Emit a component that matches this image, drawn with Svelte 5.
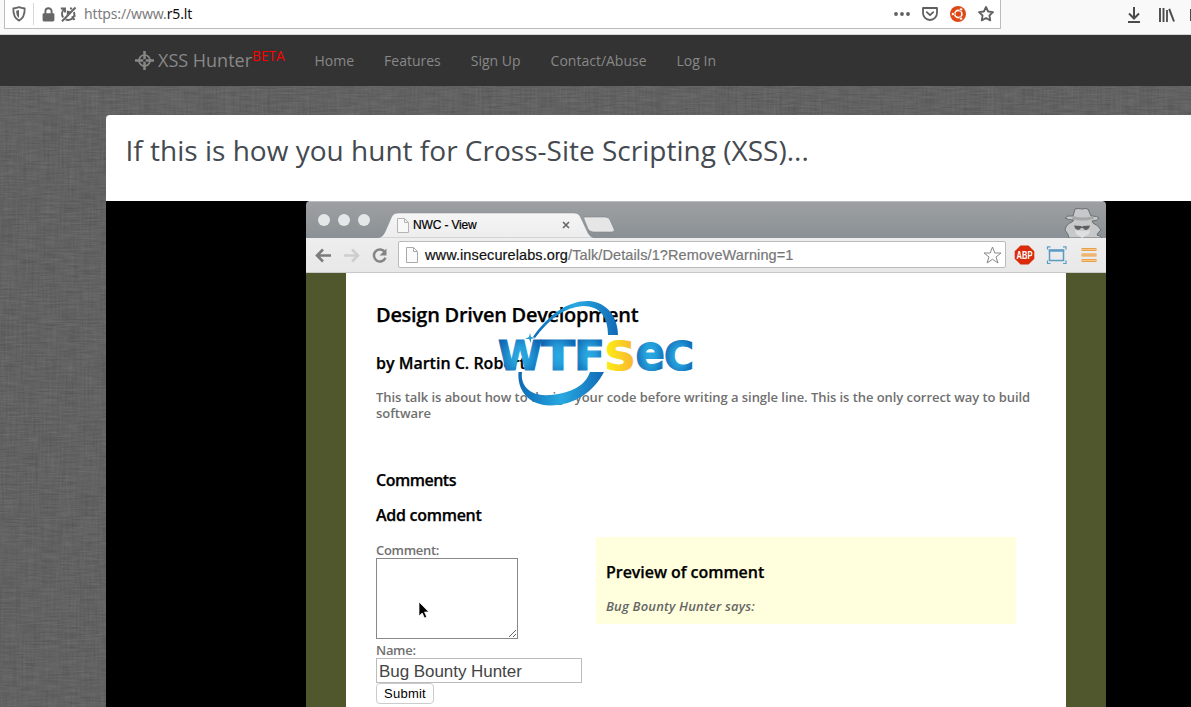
<script>
  const links = ['Home', 'Features', 'Sign Up', 'Contact/Abuse', 'Log In'];
  const letters = [
    { t: 'W', x: 498, w: 44, s: 40 },
    { t: 'T', x: 541, w: 34, s: 40 },
    { t: 'F', x: 574, w: 31, s: 40 },
    { t: 'S', x: 604.5, w: 31, s: 38.5, gold: true },
    { t: 'e', x: 635.5, w: 29.5, s: 49 },
    { t: 'C', x: 664, w: 30, s: 38.5 }
  ];
</script>

<div class="screen">
  <header class="toolbar">
    <div class="urlbar">
      <svg class="shield" width="14" height="16" viewBox="0 0 14 16"><path d="M7 1.2C9 2 11 2.3 12.7 2.5C12.8 8 12 12 7 14.6C2 12 1.2 8 1.3 2.5C3 2.3 5 2 7 1.2Z" fill="none" stroke="#666" stroke-width="1.8"/><path d="M7 4V12C4.8 10.5 4.2 8 4.2 4.7Z" fill="#666"/></svg>
      <i class="sep"></i>
      <svg class="lock" width="13" height="15" viewBox="0 0 13 15"><path d="M3.4 7V4.3a3.1 3.1 0 0 1 6.2 0V7" fill="none" stroke="#666" stroke-width="1.9"/><rect x=".6" y="6.2" width="11.8" height="8.2" rx="1.3" fill="#666"/></svg>
      <svg class="perm" width="17" height="16" viewBox="0 0 17 16" fill="none" stroke="#666" stroke-width="1.9"><path d="M3.200 11.500A6 6 0 0 1 4.500 3M.8 2.500H5V6.500M10 2.200A6 6 0 0 1 12 2.800M14 6A6 6 0 0 1 8 14L5.500 13.500M15.500 9.500l-3 1.500 2 3"/><path d="M2 15.200L15.500 1.500" stroke-width="2"/><path d="M6.800 4.500v5l4.200-4Z" fill="#666" stroke="none"/></svg>
      <span class="url">https://www.<b>r5.lt</b></span>
      <span class="grow"></span>
      <div class="actions">
        <svg width="16" height="16" viewBox="0 0 16 16" fill="#5f5f5f"><circle cx="2" cy="8" r="1.9"/><circle cx="8" cy="8" r="1.9"/><circle cx="14" cy="8" r="1.9"/></svg>
        <svg width="16" height="16" viewBox="0 0 16 16" fill="none" stroke="#5f5f5f" stroke-width="1.8" stroke-linecap="round" stroke-linejoin="round"><path d="M1 2h14v5a7 7 0 0 1-14 0Z"/><path d="M4.8 6.2L8 9.2l3.2-3"/></svg>
        <svg width="16" height="16" viewBox="0 0 16 16"><circle cx="8" cy="8" r="8" fill="#dd4814"/><circle cx="8.3" cy="8" r="3.6" fill="none" stroke="#fff" stroke-width="1.6"/><g fill="#fff" stroke="#dd4814" stroke-width=".7"><circle cx="2.9" cy="8" r="1.6"/><circle cx="11" cy="3.4" r="1.6"/><circle cx="11" cy="12.6" r="1.6"/></g></svg>
        <svg width="16" height="16" viewBox="0 0 16 16" fill="none" stroke="#5f5f5f" stroke-width="1.8" stroke-linejoin="round"><path d="M8 1l2.1 4.5 4.900.6-3.600 3.400.9 4.900L8 12l-4.300 2.400.9-4.900L1 6.100l4.900-.6Z"/></svg>
      </div>
    </div>
    <div class="tools">
      <svg width="14" height="16" viewBox="0 0 14 16" fill="none" stroke="#4b4b4d" stroke-width="2"><path d="M7 0v11M2 6.500l5 5 5-5M1 15h12"/></svg>
      <svg width="16" height="14" viewBox="0 0 16 14" fill="none" stroke="#4b4b4d" stroke-width="2"><path d="M1 0v14M4.500 0v14" stroke-width="1.900"/><path d="M8 2v12" stroke-width="1.800"/><path d="M10.200.8L15 13.500"/></svg>
      <i class="stub"></i>
    </div>
  </header>

  <nav class="nav">
    <svg width="19" height="19" viewBox="0 0 19 19" fill="none" stroke="#888"><circle cx="9.500" cy="9.500" r="5.500" stroke-width="1.700"/><path d="M9.500 0v8.200M9.500 10.800V19M0 9.500h8.200M10.800 9.500H19" stroke-width="2.500"/></svg>
    <span class="brand">XSS Hunter<sup>BETA</sup></span>
    <div class="links">{#each links as l}<a href="#top">{l}</a>{/each}</div>
  </nav>

  <main class="page">
    <svg class="linen" width="1191" height="621" aria-hidden="true">
      <defs>
        <filter id="weft" x="0" y="0" width="100%" height="100%" color-interpolation-filters="sRGB"><feTurbulence type="fractalNoise" baseFrequency=".05 .6" numOctaves="3" seed="4"/><feColorMatrix values=".16 0 0 0 .305  .16 0 0 0 .305  .16 0 0 0 .305  0 0 0 0 1"/></filter>
        <filter id="warp" x="0" y="0" width="100%" height="100%" color-interpolation-filters="sRGB"><feTurbulence type="fractalNoise" baseFrequency=".5 .03" numOctaves="3" seed="9"/><feColorMatrix values=".14 0 0 0 .315  .14 0 0 0 .315  .14 0 0 0 .315  0 0 0 0 1"/></filter>
      </defs>
      <rect width="1191" height="621" filter="url(#weft)"/>
      <rect width="1191" height="621" filter="url(#warp)" opacity=".4"/>
    </svg>
    <section class="panel">
      <h1>If this is how you hunt for Cross-Site Scripting (XSS)...</h1>
      <div class="video">
        <div class="window">
          <div class="tabs">
            <svg width="800" height="37" viewBox="0 0 800 37">
              <defs>
                <linearGradient id="bar" x2="0" y2="1"><stop stop-color="#9da1a4"/><stop offset="1" stop-color="#8b9094"/></linearGradient>
                <linearGradient id="tab" x2="0" y2="1"><stop stop-color="#f5f5f5"/><stop offset="1" stop-color="#ededed"/></linearGradient>
              </defs>
              <path d="M0 37V4q0-4 4-4H796q4 0 4 4V37Z" fill="url(#bar)"/>
              <path d="M3 .5H797" stroke="#b9bdbf"/>
              <g fill="#e4e7e8"><circle cx="18" cy="19" r="6"/><circle cx="38" cy="19" r="6"/><circle cx="58" cy="19" r="6"/></g>
              <path d="M72 37Q77 36 79 31L86 15Q88 12 92 12H268Q272 12 274 15L282 32Q284 36 288 37Z" fill="url(#tab)" stroke="#858a8e" stroke-width=".5"/>
              <path d="M279 16H299Q303 16 304 19L308 28Q309 31 305 31H287Q284 31 282 28L278 18Q277 16 279 16Z" fill="#e6e6e6" stroke="#7e8386" stroke-width=".6"/>
              <path d="M91.500 17.500h7l4 4v10h-11ZM98.500 17.500v4h4" fill="#f8f8f8" stroke="#b5b5b5"/>
              <path d="M257 21l6 6M263 21l-6 6" stroke="#666" stroke-width="1.600"/>
              <path d="M763 37q0-3-4-8 1-6 7-8l2-2q-6 0-9-2 2-3 8-2l2-7q3-1 7 0 4-1 6 0l3 7q7 0 8 2-2 3-7 3l1 2q5 2 8 7-4 3-4 5 4 1 5 3Z" fill="#c6c8c9" stroke="#6b6f72" stroke-width="1"/>
              <path d="M769 29q8 2 15 0l-1 4-7 4-6-4Z" fill="#dedfdf"/>
              <path d="M767 15q10 3 20 0l1 3q-12 3-22 0Z" fill="#a5a7a8"/>
              <path d="M768 24.500l7 .5 1 1 1-1 7-.5q-1 4-4 4.500-2 0-3-2h-2q-1 2-3 2-3-.5-4-4.500Z" fill="#5e5f61"/>
            </svg>
            <span class="tabname">NWC - View</span>
          </div>
          <div class="chromebar">
            <svg width="92" height="35" viewBox="0 0 92 35"><g fill="none" stroke-width="2.600"><path d="M25 17.500H12M17 11.500l-6 6 6 6" stroke="#7c7c7c"/><path d="M38 17.500H51M46 11.500l6 6-6 6" stroke="#cecece"/><path d="M79 14.200a6 6 0 1 0 .5 5.600" stroke="#858585" stroke-width="2.500"/></g><path d="M80.500 10.500v7h-7Z" fill="#858585"/></svg>
            <div class="address">
              <svg width="14" height="16" viewBox="0 0 14 16"><path d="M1.500.5h7l4 4v11h-11ZM8.500.5v4h4" fill="#fbfbfb" stroke="#aaa"/></svg>
              <span>www.insecurelabs.org<em>/Talk/Details/1?RemoveWarning=1</em></span>
              <svg width="19" height="18" viewBox="0 0 19 18"><path d="M9.500 1l2.300 6H18l-5 4 2 6-5.500-3.700L4 17l2-6L1 7h6.200Z" fill="#fff" stroke="#888"/></svg>
            </div>
            <svg class="exts" width="94" height="35" viewBox="0 0 94 35"><path d="M8.500 8h8l5.800 5.800v7.600l-5.800 5.800h-8L2.700 21.400v-7.600Z" fill="#da2b0b" transform="translate(0 -.6)"/><text x="12.500" y="20.600" text-anchor="middle" textLength="16" lengthAdjust="spacingAndGlyphs">ABP</text><g fill="none" stroke="#5b9cc4" stroke-width="1.500"><rect x="37.500" y="12" width="14" height="10.500"/><path d="M36.800 12.800h15.400" stroke-width="2"/><path d="M35.500 11.500V8.800h3M51 8.800h3V11.500M54 22.500v3h-3M38.500 25.500h-3v-3" stroke-width="1.200"/></g><path d="M69.500 11.500h15M69.500 17h15M69.500 22.500h15" stroke="#e9a04a" stroke-width="3"/><path d="M69.500 11.500h15M69.500 17h15M69.500 22.500h15" stroke="#f9c88b" stroke-width="1.200"/></svg>
          </div>
          <div class="site">
            <article>
              <h2>Design Driven Development</h2>
              <h3 class="by">by Martin C. Robert</h3>
              <p class="desc"><span>This talk is about how to design your code before writing a single line. This is the only correct way to build</span><br>software</p>
              <h3 class="comments">Comments</h3>
              <h3 class="add">Add comment</h3>
              <div class="cols">
                <div class="form">
                  <label for="c">Comment:</label>
                  <div class="area" id="c"><svg width="9" height="9" viewBox="0 0 9 9" stroke="#666"><path d="M1 8L8 1M5 8l3-3"/></svg></div>
                  <label for="n">Name:</label>
                  <div class="name" id="n">Bug Bounty Hunter</div>
                  <div class="submit">Submit</div>
                </div>
                <div class="preview"><h3>Preview of comment</h3><p>Bug Bounty Hunter says:</p></div>
              </div>
            </article>
          </div>
        </div>
      </div>
    </section>
  </main>

  <svg class="overlay" width="1191" height="707" viewBox="0 0 1191 707">
    <defs>
      <linearGradient id="swoosh" x1="0" y1="0" x2="1" y2="0"><stop stop-color="#0d69b5"/><stop offset=".5" stop-color="#28a9e1"/><stop offset="1" stop-color="#1169b5"/></linearGradient>
      <radialGradient id="blue" r=".6"><stop stop-color="#29abe2"/><stop offset=".35" stop-color="#249cd8"/><stop offset=".85" stop-color="#1068b4"/></radialGradient>
      <linearGradient id="gold"><stop stop-color="#fbf112"/><stop offset="1" stop-color="#f9b233"/></linearGradient>
    </defs>
    <path d="M533 337C549 314 568 301 588 301C608 302 618 318 618 335H608C608 317 600 306 583 306C565 307 549 319 535 338Z" fill="url(#swoosh)"/>
    <path d="M518.500 372H522C520 388 533 397 551 395C571 393 585 386 590 372H604C594 391 575 405.500 550 405.500C529 405 517 391 518.500 372Z" fill="url(#swoosh)"/>
    <path d="M530 333l1 4 4 1-4 1 0 4-2-4-4 0 4-2Z" fill="#2499d5"/>
    {#each letters as l}
      <text class="mark" x={l.x} y="370" font-size={l.s} textLength={l.w} lengthAdjust="spacingAndGlyphs" fill={l.gold ? 'url(#gold)' : 'url(#blue)'} stroke={l.gold ? 'url(#gold)' : 'url(#blue)'}>{l.t}</text>
    {/each}
    <path d="M419 602v14l3.200-3 2.300 5 2.200-1-2.200-5h4.300Z" fill="#000" stroke="#fff" stroke-width=".7"/>
  </svg>
</div>

<style>
  :global(body) { overflow: hidden; }
  * { box-sizing: border-box; }
  .screen { position: relative; width: 1191px; height: 707px; overflow: hidden; font-family: "Open Sans", sans-serif; display: flex; flex-direction: column; }
  svg { display: block; flex: none; }
  .toolbar { height: 35px; background: #f9f9fa; border-bottom: 1px solid #d3d3d4; display: flex; align-items: flex-start; padding-left: 4px; flex: none; }
  .urlbar { width: 997px; height: 29px; background: #fff; border: 1px solid #bcbcbc; border-top: 0; display: flex; align-items: center; padding: 0 6px 0 7px; }
  .sep { width: 1px; height: 22px; background: #d7d7d8; margin: 0 8px 0 7px; }
  .perm { margin-left: 5px; }
  .url { font-family: "Noto Sans", sans-serif; font-size: 14px; line-height: 20px; color: #7c7c7d; margin-left: 7px; letter-spacing: -.15px; }
  .url b { font-weight: 400; color: #0c0c0d; }
  .grow { flex: 1; }
  .actions { display: flex; gap: 12px; }
  .tools { flex: 1; display: flex; align-items: center; height: 29px; padding-left: 126px; gap: 18px; overflow: hidden; }
  .stub { width: 6px; height: 12px; border: 2px solid #4b4b4d; flex: none; margin-left: -3px; }
  .nav { height: 51px; background: #333; flex: none; display: flex; align-items: center; padding: 0 0 1px 135px; color: #888; }
  .brand { font-size: 18px; margin-left: 4px; white-space: nowrap; width: 129px; line-height: 24px; }
  .brand sup { font-size: 13.700px; color: #f00; line-height: 0; vertical-align: 6px; }
  .links { display: flex; gap: 30px; margin-left: 27.500px; font-size: 14px; }
  .links a { color: #888; text-decoration: none; }
  .page { position: relative; height: 621px; background: #616161; padding: 29px 0 0 106px; flex: none; }
  .linen { position: absolute; left: 0; top: 0; }
  .panel { position: relative; height: 592px; background: #fff; border-radius: 4px 0 0 0; overflow: hidden; }
  h1 { margin: 0; height: 86px; padding: 15px 0 0 19.500px; font-size: 28px; line-height: 40px; font-weight: 400; color: #444a50; white-space: nowrap; letter-spacing: .01px; }
  .video { background: #000; height: 506px; padding-left: 200px; }
  .window { width: 800px; font-family: "Liberation Sans", sans-serif; }
  .tabs { position: relative; height: 37px; }
  .tabname { position: absolute; left: 107px; top: 17px; font-size: 12px; line-height: 15px; color: #000; -webkit-text-stroke: .2px; letter-spacing: -.15px; }
  .chromebar { height: 35px; background: linear-gradient(#eee, #e8e8e8); border-bottom: 1px solid #c9c9c9; display: flex; align-items: flex-start; }
  .address { width: 608px; height: 27px; margin-top: 3px; background: #fff; border: 1px solid #bbb; border-radius: 2px; display: flex; align-items: center; padding: 0 3px 0 6px; }
  .address span { flex: 1; margin-left: 6px; font-size: 14.500px; letter-spacing: .1px; color: #111; -webkit-text-stroke: .2px; white-space: nowrap; }
  .address em { font-style: normal; color: #777; }
  .exts { margin-left: 6px; }
  .exts text { font: 700 10px "Liberation Sans", sans-serif; fill: #fff; }
  .site { height: 434px; background: #50572d; padding: 0 40px; }
  article { height: 434px; background: #fff; padding: 28px 30px 0; font-family: "Open Sans", sans-serif; color: #666; }
  h2, h3 { margin: 0; color: #000; font-weight: 600; white-space: nowrap; -webkit-text-stroke: .25px #000; }
  h2 { font-size: 20px; line-height: 28px; letter-spacing: -.28px; }
  h3 { font-size: 16px; line-height: 22px; letter-spacing: -.05px; }
  .by { margin-top: 23px; letter-spacing: 0; }
  .desc { margin: 15px 0 0; font-size: 13px; line-height: 16px; font-weight: 600; color: #707070; white-space: nowrap; letter-spacing: -.058px; }
  .comments { margin-top: 48px; letter-spacing: -.5px; }
  .add { margin-top: 13px; letter-spacing: -.28px; }
  .cols { display: flex; align-items: flex-start; margin-top: 11px; }
  .form { width: 220px; padding-top: 5px; font-size: 13px; font-weight: 600; color: #707070; }
  label { display: block; line-height: 16px; height: 16px; letter-spacing: -.3px; }
  .area { width: 142px; height: 81px; border: 1px solid #888; display: flex; align-items: flex-end; justify-content: flex-end; margin-bottom: 3px; }
  .name { width: 206px; height: 25px; border: 1px solid #bbb; font: 17px/25px "Liberation Sans", sans-serif; color: #444; padding-left: 2px; letter-spacing: -.05px; }
  .submit { width: 58px; height: 21px; border: 1px solid #ccc; border-radius: 4px; font: 13px/19px "Liberation Sans", sans-serif; color: #000; text-align: center; letter-spacing: .25px; }
  .preview { width: 420px; height: 87px; background: #fffedd; padding: 24px 10px 0; }
  .preview p { margin: 13px 0 0; font-size: 13px; line-height: 20px; font-weight: 600; font-style: italic; color: #666; letter-spacing: .17px; }
  .overlay { position: absolute; left: 0; top: 0; pointer-events: none; }
  .mark { font-family: "DejaVu Sans", sans-serif; font-weight: 700; stroke-width: 1.200px; }
</style>
